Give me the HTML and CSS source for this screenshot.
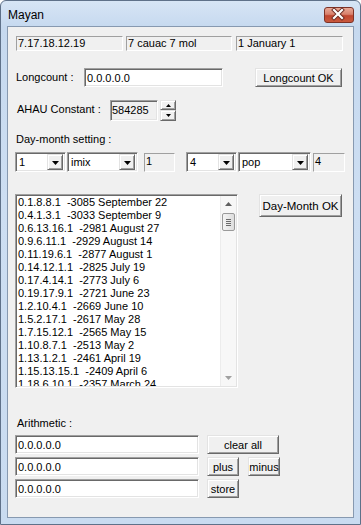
FILE: index.html
```html
<!DOCTYPE html>
<html>
<head>
<meta charset="utf-8">
<link rel="stylesheet" href="styles.css">
</head>
<body>
<div class="window">
  <div class="titlebar">
    <span class="title">Mayan</span>
    <div class="close">
      <svg width="30" height="16" viewBox="0 0 30 16">
        <path d="M11 4 L19 12 M19 4 L11 12" stroke="#6b2a22" stroke-width="4" stroke-linecap="square"/>
        <path d="M11 4 L19 12 M19 4 L11 12" stroke="#ffffff" stroke-width="2.2" stroke-linecap="square"/>
      </svg>
    </div>
  </div>
  <div class="client">
    <div class="row info">
      <div class="ro w107">7.17.18.12.19</div>
      <div class="ro w106">7 cauac 7 mol</div>
      <div class="ro w107">1 January 1</div>
    </div>

    <div class="row lc">
      <span class="lbl lc-lbl">Longcount :</span>
      <div class="edit lc-edit">0.0.0.0.0</div>
      <div class="btn lc-btn">Longcount OK</div>
    </div>

    <div class="row ahau">
      <span class="lbl ahau-lbl">AHAU Constant :</span>
      <div class="edit gray ahau-edit">584285</div>
      <div class="spin">
        <div class="btn spin-up"><svg width="5" height="3" viewBox="0 0 5 3"><path d="M2.5 0 L5 3 L0 3 Z" fill="#000"/></svg></div>
        <div class="btn spin-dn"><svg width="5" height="3" viewBox="0 0 5 3"><path d="M0 0 L5 0 L2.5 3 Z" fill="#000"/></svg></div>
      </div>
    </div>

    <div class="lbl dm-lbl">Day-month setting :</div>

    <div class="row combos">
      <div class="combo c1"><span class="ctext">1</span><div class="btn drop"><svg width="7" height="4" viewBox="0 0 7 4"><path d="M0 0 L7 0 L3.5 4 Z" fill="#000"/></svg></div></div>
      <div class="combo c2"><span class="ctext">imix</span><div class="btn drop"><svg width="7" height="4" viewBox="0 0 7 4"><path d="M0 0 L7 0 L3.5 4 Z" fill="#000"/></svg></div></div>
      <div class="ro small r1">1</div>
      <div class="combo c3"><span class="ctext">4</span><div class="btn drop"><svg width="7" height="4" viewBox="0 0 7 4"><path d="M0 0 L7 0 L3.5 4 Z" fill="#000"/></svg></div></div>
      <div class="combo c4"><span class="ctext">pop</span><div class="btn drop"><svg width="7" height="4" viewBox="0 0 7 4"><path d="M0 0 L7 0 L3.5 4 Z" fill="#000"/></svg></div></div>
      <div class="ro small r2">4</div>
    </div>

    <div class="row listrow">
      <div class="listbox">
        <div class="items">
          <div class="item">0.1.8.8.1  -3085 September 22</div>
          <div class="item">0.4.1.3.1  -3033 September 9</div>
          <div class="item">0.6.13.16.1  -2981 August 27</div>
          <div class="item">0.9.6.11.1  -2929 August 14</div>
          <div class="item">0.11.19.6.1  -2877 August 1</div>
          <div class="item">0.14.12.1.1  -2825 July 19</div>
          <div class="item">0.17.4.14.1  -2773 July 6</div>
          <div class="item">0.19.17.9.1  -2721 June 23</div>
          <div class="item">1.2.10.4.1  -2669 June 10</div>
          <div class="item">1.5.2.17.1  -2617 May 28</div>
          <div class="item">1.7.15.12.1  -2565 May 15</div>
          <div class="item">1.10.8.7.1  -2513 May 2</div>
          <div class="item">1.13.1.2.1  -2461 April 19</div>
          <div class="item">1.15.13.15.1  -2409 April 6</div>
          <div class="item">1.18.6.10.1  -2357 March 24</div>
        </div>
        <div class="vscroll">
          <div class="sarrow"><svg width="7" height="4" viewBox="0 0 7 4"><path d="M3.5 0 L7 4 L0 4 Z" fill="#606060"/></svg></div>
          <div class="thumb"><span></span><span></span><span></span><span></span></div>
          <div class="sfill"></div>
          <div class="sarrow"><svg width="7" height="4" viewBox="0 0 7 4"><path d="M0 0 L7 0 L3.5 4 Z" fill="#a0a0a0"/></svg></div>
        </div>
      </div>
      <div class="btn dm-btn">Day-Month OK</div>
    </div>

    <div class="lbl ar-lbl">Arithmetic :</div>

    <div class="arith">
      <div class="edit ar-edit">0.0.0.0.0</div>
      <div class="bcell"><div class="btn clear">clear all</div></div>
      <div class="edit ar-edit">0.0.0.0.0</div>
      <div class="bcell"><div class="btn sm">plus</div><div class="btn sm minus">minus</div></div>
      <div class="edit ar-edit">0.0.0.0.0</div>
      <div class="bcell"><div class="btn sm">store</div></div>
    </div>
  </div>
</div>
</body>
</html>
```

FILE: styles.css
```css
html, body {
  margin: 0;
  padding: 0;
  background: #ffffff;
}

body {
  width: 361px;
  height: 525px;
  overflow: hidden;
  font-family: "Liberation Sans", Arial, sans-serif;
  font-size: 11px;
  color: #000;
}

.window {
  box-sizing: border-box;
  width: 361px;
  height: 525px;
  display: flex;
  flex-direction: column;
  border: 1px solid #5f7189;
  border-radius: 6px 6px 0 0;
  background: linear-gradient(180deg, #d7e5f5 0px, #c6d9ef 26px, #cddef2 200px, #c9dbf0 525px);
  padding: 0 6px 6px 6px;
}

.titlebar {
  height: 25px;
  display: flex;
  align-items: center;
  padding-left: 1px;
}

.title {
  font-family: "Liberation Sans", Arial, sans-serif;
  font-size: 12px;
  color: #000;
  padding-top: 3px;
}

.close {
  margin-left: auto;
  margin-right: 0px;
  margin-top: 2px;
  width: 30px;
  height: 16px;
  box-sizing: border-box;
  border: 1px solid #7d3226;
  border-radius: 3px;
  background: linear-gradient(180deg, #e9a996 0%, #d8806c 45%, #c0452f 55%, #c95a3e 100%);
  display: flex;
  align-items: center;
  justify-content: center;
}

.close svg {
  display: block;
  margin-top: -1px;
  margin-left: -2px;
}

.client {
  flex: 1;
  background: #f0f0f0;
  border: 1px solid #8799b0;
  padding: 9px 11px 0 7px;
  display: flex;
  flex-direction: column;
  align-items: flex-start;
}

.row {
  display: flex;
  align-items: center;
}

.lbl {
  white-space: nowrap;
  line-height: 13px;
}

/* read-only static boxes */
.ro {
  box-sizing: border-box;
  height: 15px;
  line-height: 13px;
  padding-left: 1px;
  background: #f0f0f0;
  border: 1px solid;
  border-color: #a0a0a0 #ffffff #ffffff #a0a0a0;
  white-space: nowrap;
}

.w107 { width: 107px; }
.w106 { width: 106px; }

.info { margin-left: 1px; gap: 3px; }
.info .ro:last-child { margin-left: 1px; }

/* sunken edit */
.edit {
  box-sizing: border-box;
  background: #ffffff;
  border: 1px solid;
  border-color: #a0a0a0 #ffffff #ffffff #a0a0a0;
  box-shadow: inset 1px 1px 0 #696969, inset -1px -1px 0 #e3e3e3;
  padding: 0 2px;
  display: flex;
  align-items: center;
  white-space: nowrap;
}

.edit.gray { background: #f0f0f0; }

/* raised button */
.btn {
  box-sizing: border-box;
  background: #f0f0f0;
  border: 1px solid;
  border-color: #e3e3e3 #696969 #696969 #e3e3e3;
  box-shadow: inset 1px 1px 0 #ffffff, inset -1px -1px 0 #a0a0a0;
  display: flex;
  align-items: center;
  justify-content: center;
  white-space: nowrap;
}

/* longcount row */
.lc { margin-top: 17px; height: 19px; }
.lc-lbl { width: 68px; margin-left: 1px; }
.lc-edit { width: 139px; height: 19px; }
.lc-btn { width: 87px; height: 19px; margin-left: 32px; }

/* ahau row */
.ahau { margin-top: 13px; height: 21px; }
.ahau-lbl { width: 93px; margin-left: 2px; margin-top: -3px; }
.ahau-edit { width: 48px; height: 21px; padding: 0 1px; align-items: flex-start; padding-top: 3px; }
.spin { display: flex; flex-direction: column; margin-left: 2px; }
.spin-up { width: 16px; height: 10px; }
.spin-dn { width: 16px; height: 11px; }
.spin svg { display: block; }

.dm-lbl { margin-top: 12px; margin-left: 1px; }

/* combos */
.combos { margin-top: 6px; height: 20px; margin-left: 0; }
.combo {
  box-sizing: border-box;
  height: 20px;
  background: #fff;
  border: 1px solid;
  border-color: #a0a0a0 #ffffff #ffffff #a0a0a0;
  box-shadow: inset 1px 1px 0 #696969, inset -1px -1px 0 #e3e3e3;
  padding: 2px;
  display: flex;
  align-items: center;
}
.ctext { flex: 1; padding-left: 1px; margin-top: -1px; }
.drop { width: 16px; height: 16px; }
.drop svg { display: block; margin-top: 1px; }
.c1 { width: 51px; }
.c2 { width: 71px; margin-left: 1px; }
.small { height: 19px; line-height: 15px; align-self: flex-start; margin-top: 1px; }
.r1 { width: 31px; margin-left: 6px; }
.c3 { width: 51px; margin-left: 11px; }
.c4 { width: 73px; margin-left: 1px; }
.r2 { width: 32px; margin-left: 2px; }

/* list */
.listrow { margin-top: 22px; align-items: flex-start; }
.listbox {
  box-sizing: border-box;
  width: 223px;
  height: 194px;
  background: #fff;
  border: 1px solid;
  border-color: #a0a0a0 #ffffff #ffffff #a0a0a0;
  box-shadow: inset 1px 1px 0 #696969, inset -1px -1px 0 #e3e3e3;
  padding: 1px 1px 1px 1px;
  display: flex;
  overflow: hidden;
}
.items {
  flex: 1;
  padding-left: 1px;
  line-height: 13px;
  overflow: hidden;
  height: 190px;
}
.item {
  white-space: pre;
  height: 13px;
}
.vscroll {
  width: 15px;
  height: 190px;
  background: #f7f7f7;
  border-left: 1px solid #ececec;
  display: flex;
  flex-direction: column;
  align-items: center;
}
.sarrow {
  height: 16px;
  display: flex;
  align-items: center;
  justify-content: center;
}
.sarrow svg { display: block; }
.thumb {
  box-sizing: border-box;
  width: 13px;
  height: 18px;
  margin-top: 1px;
  border: 1px solid #9a9a9a;
  border-radius: 2px;
  background: linear-gradient(90deg, #f4f4f4, #dedede);
  display: flex;
  flex-direction: column;
  align-items: center;
  justify-content: center;
  gap: 1px;
}
.thumb span {
  display: block;
  width: 5px;
  height: 1px;
  background: #6b6b6b;
}
.sfill { flex: 1; }
.dm-btn { width: 83px; height: 23px; margin-left: 21px; font-size: 11.5px; }

.ar-lbl { margin-top: 29px; margin-left: 2px; }

/* arithmetic */
.arith {
  margin-top: 5px;
  display: grid;
  grid-template-columns: 184px auto;
  grid-template-rows: 19px 19px 19px;
  row-gap: 3px;
  column-gap: 8px;
}
.ar-edit { height: 19px; }
.bcell { display: flex; align-items: stretch; }
.clear { width: 72px; }
.sm { width: 32px; }
.minus { margin-left: 9px; }
```
